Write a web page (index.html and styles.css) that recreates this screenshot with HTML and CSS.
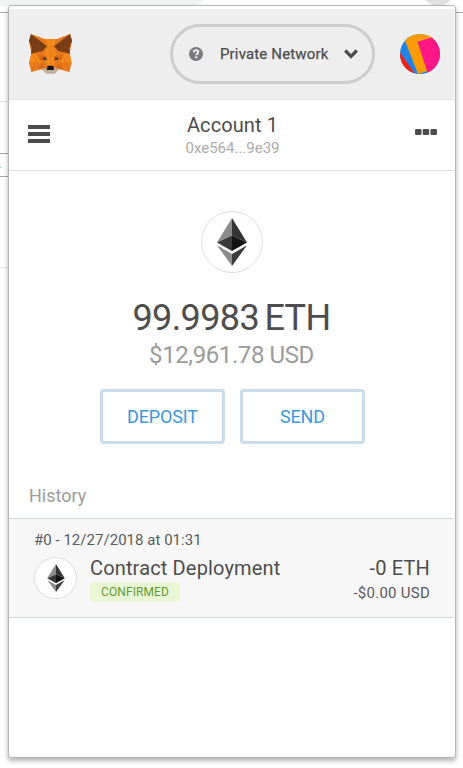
FILE: index.html
```html
<!DOCTYPE html>
<html lang="en">
<head>
<meta charset="utf-8">
<title>Wallet</title>
<link rel="stylesheet" href="styles.css">
</head>
<body>
<svg class="backdrop" width="463" height="768" aria-hidden="true">
  <path fill="#f0f2f4" d="M0 0h204q-6 6-14 6H0z"/>
  <circle cx="438" cy="-10" r="16" fill="#e1e1e1"/>
  <path d="M0 12.500h463M0 153.500h9M0 176.500h9" stroke="#a9a9a9"/>
  <path d="M0 101.500h9M0 267.500h9" stroke="#e4e4e4"/>
  <path d="M0 167.500h1" stroke="#8bbddd"/><path d="M8 162.500h1" stroke="#555"/>
</svg>
<svg class="defs" width="0" height="0" aria-hidden="true">
  <symbol id="eth" viewBox="0 0 30 48">
    <path fill="#8c8c8c" d="M15 0v17.500L0 24.500z"/>
    <path fill="#343434" d="M15 0v17.500l15 7z"/>
    <path fill="#393939" d="M15 17.500V33L0 24.500z"/>
    <path fill="#141414" d="M15 17.500V33l15-8.500z"/>
    <path fill="#8c8c8c" d="M0 27.300l15 8.600V48z"/>
    <path fill="#3c3c3b" d="M30 27.300l-15 8.600V48z"/>
  </symbol>
</svg>
<main class="popup">
  <header class="top">
    <svg class="fox" viewBox="87 102 129 120" preserveAspectRatio="none">
      <path fill="#e9791b" d="M93 102L134 117H171L210 102L216 122L209 160L215 188L208 216L178 208L164 218H138L125 208L94 216L87 188L94 160L87 122z"/>
      <path fill="#f58a1c" d="M134 117H171L163 139L168 170L162 198H141L135 170L141 139zM94 160L115 166L125 190H88zM209 160L188 166L178 190H214z"/>
      <path fill="#d96916" d="M116 165L140 168L142 182L119 181zM187 165L163 168L161 182L184 181zM125 189L137 204L113 208zM178 189L166 204L190 208z"/>
      <path fill="#763d16" d="M93 102L141 139L128 153L93 161L95 144L87 122zM210 102L162 139L175 153L210 161L208 144L216 122z"/>
      <path fill="#c0ada0" d="M125 206L141 204V208H162V204L178 206L164 221H139z"/>
      <path fill="#303e47" d="M128 174l8-2 4 7-9 1zM175 174l-8-2-4 7 9 1z"/>
      <path fill="#161616" d="M143 197H160L162 210H140z"/>
      <path class="facets" d="M93 102l20 52m-26-32l40 31m7-36l7 22 11 31 11-31 8-22M93 161l48-22-26 27-21 50m-7-28h38l-10-22 26 32m69-96l-20 52m26-32l-40 31m34 8l-48-22 26 27 21 50m7-28h-38l10-22-26 32M115 110l4 49m69-49l-4 49M141 139h22M94 160l31 48m84-48l-31 48M152 117v80"/>
    </svg>
    <div class="network">
      <svg class="help" viewBox="0 0 14 14"><circle cx="7" cy="7" r="7" fill="#7a7a7e"/><path d="M4.700 5.300C4.900 3.800 6 3.300 7.100 3.300c1.200 0 2.200.7 2.200 1.800 0 1.500-2 1.600-2 3.200M7.200 9.300v1.900" fill="none" stroke="#eee" stroke-width="2"/></svg>
      <span class="network-name">Private Network</span>
      <svg class="chevron" viewBox="0 0 14 10"><path d="M1.200 1.500L7 7.300l5.800-5.800" fill="none" stroke="#4d4d4d" stroke-width="3.300"/></svg>
    </div>
    <svg class="avatar" viewBox="0 0 40 40">
      <clipPath id="round"><circle cx="20" cy="20" r="20"/></clipPath>
      <g clip-path="url(#round)"><path fill="#2484e3" d="M0 0h40v40H0z"/><path fill="#fa1d0b" d="M0 18.500L15 40H0z"/><path fill="#f89c01" d="M4 4L18 40l9.500-3L40 0H4z"/><path fill="#ff1788" d="M17.500 7.700L33 3l10 3v34H28z"/></g>
    </svg>
  </header>
  <section class="account">
    <svg class="menu" viewBox="0 0 22 18"><path fill="#4d4d4d" d="M0 0h22v4H0zM0 7h22v4H0zM0 14h22v4H0z"/></svg>
    <div class="identity"><div class="name"><span>Account 1</span></div><div class="address"><span>0xe564...9e39</span></div></div>
    <svg class="more" viewBox="0 0 22 6"><g fill="#4d4d4d"><rect width="6.500" height="6" rx="1.200"/><rect x="7.700" width="6.500" height="6" rx="1.200"/><rect x="15.500" width="6.500" height="6" rx="1.200"/></g></svg>
  </section>
  <section class="balance">
    <div class="token"><svg width="30" height="48"><use href="#eth"/></svg></div>
    <div class="eth"><span>99.9983 ETH</span></div>
    <div class="usd"><span>$12,961.78 USD</span></div>
    <div class="actions"><button>DEPOSIT</button><button>SEND</button></div>
  </section>
  <h2 class="history">History</h2>
  <article class="tx">
    <div class="date"><span>#0 - 12/27/2018 at 01:31</span></div>
    <div class="tx-row">
      <div class="token small"><svg width="18" height="28"><use href="#eth"/></svg></div>
      <div class="tx-info"><div class="tx-title"><span>Contract Deployment</span></div><div class="badge">CONFIRMED</div></div>
      <div class="amount"><div class="tx-title">-0 ETH</div><div class="tx-usd">-$0.00 USD</div></div>
    </div>
  </article>
</main>
</body>
</html>
```
FILE: styles.css
```css
* { box-sizing: border-box; }
body { margin: 0; height: 768px; overflow: hidden; padding: 5px 7px 0 8px; background: #fff; font-family: Roboto, sans-serif; color: #4d4d4d; }
svg { display: block; flex: none; }
.backdrop { position: absolute; left: 0; top: 0; z-index: -1; }
.defs { position: absolute; }
.popup { width: 448px; height: 753px; border: 1px solid #b5b5b5; border-radius: 3px; background: #fff; padding: 3px 1px 0 0; box-shadow: 0 3px 5px rgba(0,0,0,.3); }
.top { display: flex; align-items: center; height: 91px; padding: 0 14px 1px 20px; background: #eee; border-bottom: 1px solid #e5e5e5; }
.fox { width: 43px; height: 40px; }
.facets { fill: none; stroke: #a95310; stroke-width: 1.2; opacity: .45; }
.network { display: flex; align-items: center; width: 205px; height: 60px; margin-left: 98px; padding: 0 14px 0 16px; border: 3px solid #cdcdcd; border-radius: 30px; }
.help { width: 14px; height: 14px; }
.network-name { margin-left: 17px; width: 109px; font-size: 15px; font-weight: 400; letter-spacing: .15px; -webkit-text-stroke: .25px #4d4d4d; line-height: 20px; padding-top: 1px; white-space: nowrap; }
.chevron { width: 14px; height: 10px; margin-left: 16px; }
.avatar { width: 40px; height: 40px; margin-left: 25px; }
.account { display: flex; justify-content: space-between; height: 71px; padding: 0 17px 0 19px; border-bottom: 1px solid #e0e0e0; }
.menu { width: 22px; height: 18px; margin-top: 25px; }
.identity { text-align: center; }
.name { margin-top: 13px; font-size: 20px; line-height: 24px; letter-spacing: .1px; }
.address { margin-top: 1px; font-size: 15px; line-height: 20px; color: #ababab; }
.more { width: 22px; height: 6px; margin-top: 29px; }
.balance { display: flex; flex-direction: column; align-items: center; padding-top: 40px; }
.token { display: flex; align-items: center; justify-content: center; width: 62px; height: 62px; border: 1px solid #dedede; border-radius: 50%; background: #fff; }
.eth { margin-top: 24px; font-size: 36px; line-height: 42px; letter-spacing: -.6px; word-spacing: -3px; white-space: nowrap; }
.usd { margin-top: 1px; font-size: 24px; line-height: 30px; letter-spacing: -.4px; color: #9b9b9b; white-space: nowrap; }
.actions { display: flex; gap: 15px; margin-top: 19px; padding-left: 2px; }
button { width: 125px; height: 55px; padding: 0; border: 3px solid #c7ddec; border-radius: 4px; background: #fff; color: #3998dc; font: 400 18px/22px Roboto, sans-serif; letter-spacing: -.15px; }
.history { margin: 40px 0 0; padding-left: 20px; height: 34px; font-size: 18px; line-height: 24px; font-weight: 400; color: #9b9b9b; }
.tx { height: 100px; padding: 11px 24px 0 25px; background: #f7f7f7; border-top: 1px solid #d2d8dd; border-bottom: 1px solid #d2d8dd; }
.date { font-size: 15px; line-height: 20px; letter-spacing: .03px; color: #5b5b5b; }
.tx-row { display: flex; margin-top: 7px; }
.small { width: 43px; height: 42px; }
.tx-info { margin-left: 13px; }
.tx-title { margin-top: -1px; font-size: 20px; line-height: 24px; letter-spacing: .15px; white-space: nowrap; }
.badge { width: 90px; height: 20px; margin-top: 2px; border-radius: 4px; background: #eaf7d6; color: #609c30; font-size: 12px; line-height: 21px; letter-spacing: .1px; text-align: center; }
.amount { margin-left: auto; text-align: right; }
.tx-usd { margin-top: 3px; font-size: 15px; line-height: 20px; letter-spacing: .25px; color: #5b5b5b; }
```
